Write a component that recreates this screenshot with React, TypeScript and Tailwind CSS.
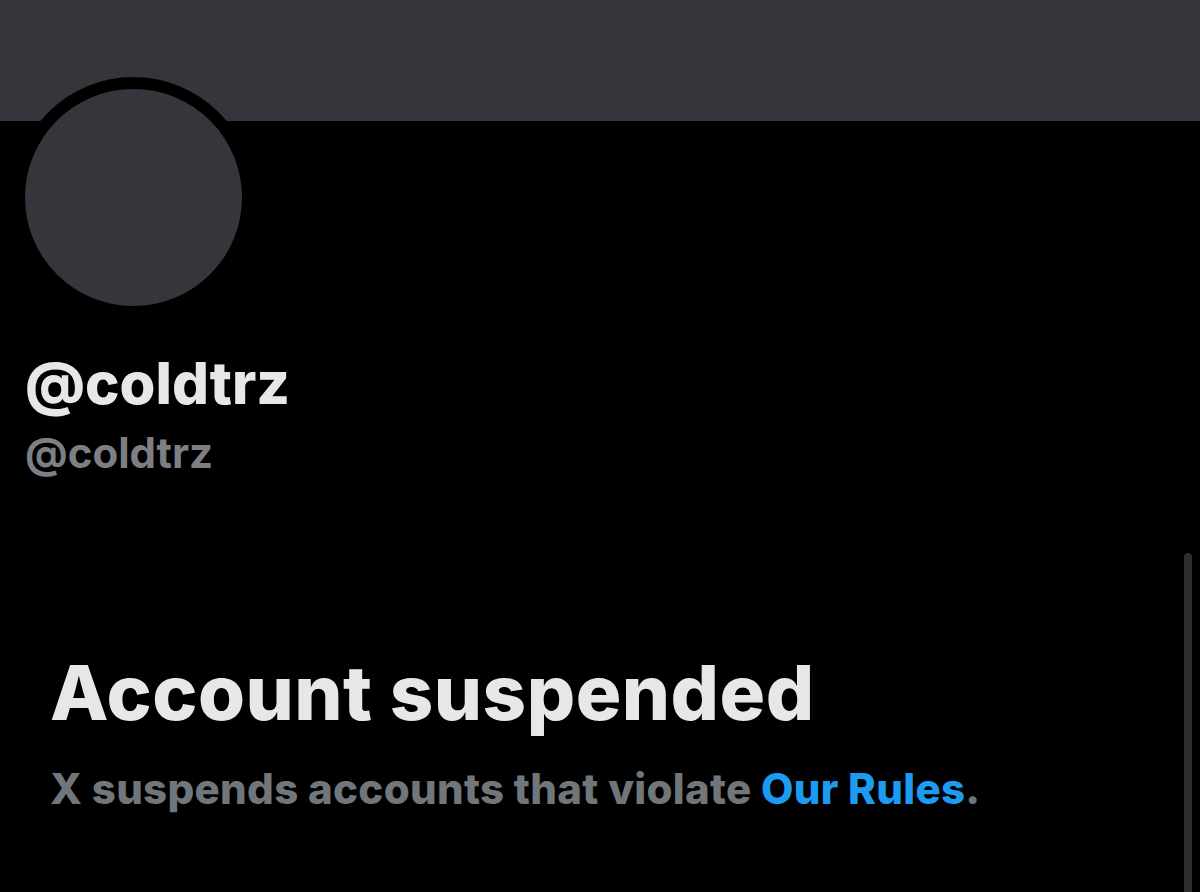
import React from "react";

const font = { fontFamily: "Inter, 'Liberation Sans', sans-serif" };

function Banner() {
  return <div className="h-[121px] w-full bg-[#35363c]" />;
}

function Avatar() {
  return (
    <div className="-mt-[44px] ml-[13px] h-[241px] w-[241px] rounded-full bg-black p-[12px]">
      <div className="h-full w-full rounded-full bg-[#35363c]" />
    </div>
  );
}

export default function App() {
  return (
    <div className="relative h-[892px] w-[1200px] overflow-hidden bg-black" style={font}>
      <Banner />
      <Avatar />

      <div className="ml-[25px] mt-[37px]">
        <h2 className="text-[58px] font-extrabold leading-[56px] text-[#e7e7e7]">@coldtrz</h2>
        <p className="mt-[18px] text-[42px] font-bold leading-[48px] text-[#7d7f84]">@coldtrz</p>
      </div>

      <div className="ml-[50px] mt-[173px]">
        <h1 className="text-[76px] font-extrabold leading-[84px] tracking-[0.5px] text-[#e7e7e7]">
          Account suspended
        </h1>
        <p className="mt-[30px] text-[42px] font-extrabold leading-[50px] tracking-[0.3px] text-[#71767b]">
          X suspends accounts that violate{" "}
          <a href="#" className="text-[#1d9bf0]">
            Our Rules
          </a>
          .
        </p>
      </div>

      {/* scroll thumb on the right edge */}
      <div className="absolute right-[8px] top-[553px] h-[360px] w-[8px] rounded-full bg-[#2e2e2e]" />
    </div>
  );
}
